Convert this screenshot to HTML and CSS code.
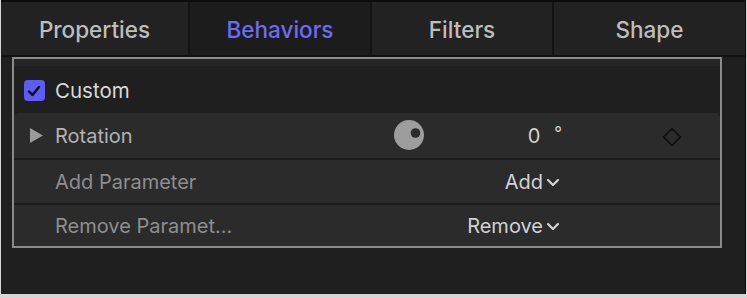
FILE: index.html
```html
<!DOCTYPE html>
<html>

<head>
    <title>Behaviors Inspector</title>
    <meta name="viewport" content="width=device-width, initial-scale=1.0">
    <link rel="stylesheet" href="styles.css">
</head>

<body>
    <div class="panel">
        <div class="tabs">
            <div class="tab tab-props">Properties</div>
            <div class="tab tab-behaviors active">Behaviors</div>
            <div class="tab tab-filters">Filters</div>
            <div class="tab tab-shape">Shape</div>
        </div>

        <div class="content">
            <div class="frame">
                <div class="frame-top"></div>

                <div class="row row-head">
                    <div class="icon-cell">
                        <span class="checkbox">
                            <svg width="14" height="12" viewBox="0 0 14 12">
                                <path d="M2 6.5 L5.5 10 L12 2" fill="none" stroke="#0b0b14" stroke-width="2.4" stroke-linecap="round" stroke-linejoin="round"/>
                            </svg>
                        </span>
                    </div>
                    <div class="label label-head">Custom</div>
                </div>

                <div class="row param first">
                    <div class="icon-cell">
                        <svg class="disclosure" width="13" height="15" viewBox="0 0 13 15">
                            <path d="M0 0 L13 7.5 L0 15 Z" fill="#9a9a9a"/>
                        </svg>
                    </div>
                    <div class="label label-light">Rotation</div>
                    <div class="dial">
                        <svg width="30" height="30" viewBox="0 0 30 30">
                            <circle cx="15" cy="15" r="15" fill="#9d9d9d"/>
                            <circle cx="21.5" cy="13" r="4.8" fill="#2b2b2b"/>
                        </svg>
                    </div>
                    <div class="value">0<span class="degree">°</span></div>
                    <div class="keyframe">
                        <svg width="20" height="20" viewBox="0 0 20 20">
                            <path d="M10 1.5 L18.5 10 L10 18.5 L1.5 10 Z" fill="none" stroke="#0e0e0e" stroke-width="1.5"/>
                        </svg>
                    </div>
                </div>

                <div class="row param">
                    <div class="icon-cell"></div>
                    <div class="label label-dim">Add Parameter</div>
                    <div class="value popup">Add<svg class="chevron" width="14" height="9" viewBox="0 0 14 9"><path d="M2 2 L7 7 L12 2" fill="none" stroke="#d4d4d4" stroke-width="2.2" stroke-linecap="round" stroke-linejoin="round"/></svg></div>
                </div>

                <div class="row param last">
                    <div class="icon-cell"></div>
                    <div class="label label-dim">Remove Paramet...</div>
                    <div class="value popup">Remove<svg class="chevron" width="14" height="9" viewBox="0 0 14 9"><path d="M2 2 L7 7 L12 2" fill="none" stroke="#d4d4d4" stroke-width="2.2" stroke-linecap="round" stroke-linejoin="round"/></svg></div>
                </div>
            </div>
        </div>
    </div>
</body>

</html>
```

FILE: styles.css
```css
* {
    margin: 0;
    padding: 0;
    box-sizing: border-box;
}

body {
    background-color: #d6d6d6;
    font-family: Inter, "Noto Sans", sans-serif;
    width: 747px;
    height: 298px;
    overflow: hidden;
}

.panel {
    margin-left: 1px;
    width: 745px;
    height: 294px;
    background-color: #1f1f1f;
    border-top: 2px solid #0c0c0c;
    border-right: 1px solid #0c0c0c;
    display: flex;
    flex-direction: column;
}

.tabs {
    display: flex;
    height: 55px;
    gap: 2px;
    background-color: #141414;
    border-bottom: 2px solid #121212;
}

.tab {
    display: flex;
    align-items: center;
    justify-content: center;
    background-color: #222222;
    color: #bdbdbd;
    font-size: 22.5px;
    font-weight: 500;
    padding-top: 2px;
}

.tab-props {
    width: 187px;
}

.tab-behaviors {
    width: 180px;
}

.tab-filters {
    width: 180px;
}

.tab-shape {
    flex: 1;
}

.tab.active {
    background-color: #1c1c1c;
    color: #6d6cf1;
}

.content {
    flex: 1;
    padding: 0 23px 0 11px;
}

.frame {
    border: 2px solid #8b8b8b;
    height: 191px;
    background-color: #1f1f1f;
    display: flex;
    flex-direction: column;
}

.frame-top {
    height: 7px;
    flex-shrink: 0;
    background-color: #262626;
}

.row {
    display: grid;
    grid-template-columns: 41px 339px 30px 138px 100px 20px 1fr;
    align-items: center;
    flex-shrink: 0;
}

.row-head {
    height: 47px;
}

.param {
    height: 45px;
    background-color: #2b2b2b;
    border-top: 2px solid #1b1b1b;
}

.param.first {
    border-top: none;
    border-radius: 5px 5px 0 0;
}

.param.last {
    height: 43px;
}

.icon-cell {
    display: flex;
    align-items: center;
    justify-content: center;
    height: 100%;
}

.checkbox {
    display: flex;
    align-items: center;
    justify-content: center;
    width: 21px;
    height: 21px;
    margin-left: -1px;
    margin-top: 2px;
    border-radius: 4px;
    background-color: #5e5cf2;
}

.disclosure {
    margin-left: 3px;
}

.label {
    font-size: 20px;
    white-space: nowrap;
}

.label-head {
    color: #d9d9d9;
    font-size: 20.5px;
    padding-top: 2px;
}

.label-light {
    color: #b3b3b3;
}

.label-dim {
    color: #8e8e8e;
}

.dial {
    display: flex;
    align-items: center;
}

.dial svg {
    margin-top: -2px;
}

.value {
    text-align: right;
    color: #d2d2d2;
    font-size: 20px;
    padding-right: 0;
}

.degree {
    display: inline-block;
    margin-left: 14px;
    font-size: 17px;
    vertical-align: 4px;
}

.popup {
    grid-column: 3 / 5;
    display: flex;
    align-items: center;
    justify-content: flex-end;
    gap: 3px;
    padding-right: 2px;
}

.chevron {
    margin-top: 1px;
}

.keyframe {
    grid-column: 6;
    display: flex;
    align-items: center;
    justify-content: center;
    padding-top: 3px;
}
```
